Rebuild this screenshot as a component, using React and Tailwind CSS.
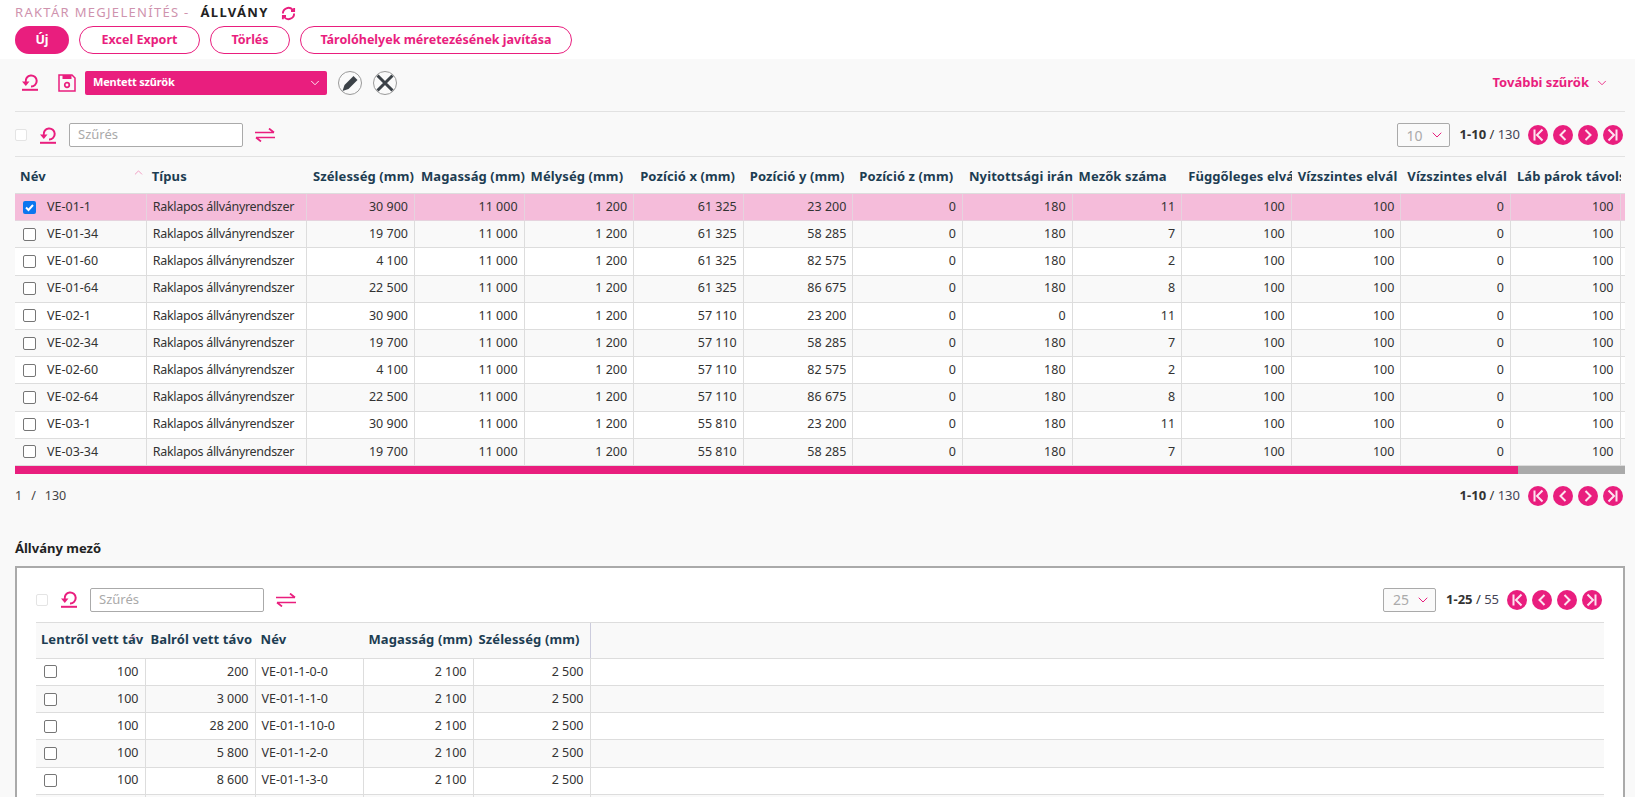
import { ChevronDown, ChevronUp } from "lucide-react";

const FONT = "font-['Noto_Sans',sans-serif]";

const MAIN_COLS = ["Név", "Típus", "Szélesség (mm)", "Magasság (mm)", "Mélység (mm)", "Pozíció x (mm)", "Pozíció y (mm)", "Pozíció z (mm)", "Nyitottsági irán", "Mezők száma", "Függőleges elvá", "Vízszintes elvál", "Vízszintes elvál", "Láb párok távols"];

const MAIN_ROWS = [
  ["VE-01-1", "30 900", "61 325", "23 200", "180", "11"],
  ["VE-01-34", "19 700", "61 325", "58 285", "180", "7"],
  ["VE-01-60", "4 100", "61 325", "82 575", "180", "2"],
  ["VE-01-64", "22 500", "61 325", "86 675", "180", "8"],
  ["VE-02-1", "30 900", "57 110", "23 200", "0", "11"],
  ["VE-02-34", "19 700", "57 110", "58 285", "180", "7"],
  ["VE-02-60", "4 100", "57 110", "82 575", "180", "2"],
  ["VE-02-64", "22 500", "57 110", "86 675", "180", "8"],
  ["VE-03-1", "30 900", "55 810", "23 200", "180", "11"],
  ["VE-03-34", "19 700", "55 810", "58 285", "180", "7"],
];

const FIELD_ROWS = [
  ["200", "VE-01-1-0-0"],
  ["3 000", "VE-01-1-1-0"],
  ["28 200", "VE-01-1-10-0"],
  ["5 800", "VE-01-1-2-0"],
  ["8 600", "VE-01-1-3-0"],
];

const MAIN_GRID = "grid grid-cols-[131.7px_160.3px_108px_repeat(11,109.6px)_20px]";
const FIELD_GRID = "grid grid-cols-[109.5px_110px_108px_110px_117px_1fr]";

function UndoIcon() {
  return (
    <svg width="18" height="17" viewBox="0 0 18 17" fill="none" stroke="#e91e7e" strokeWidth="2">
      <path d="M4.800 8 A5.500 5.500 0 1 1 10 12.500" />
      <path d="M1 7.500 L8.500 7.500 L4.800 12 Z" fill="#e91e7e" stroke="none" />
      <path d="M1 15.800 H17" />
    </svg>
  );
}

function SwapIcon() {
  return (
    <svg width="20" height="14" viewBox="0 0 20 14" fill="none" stroke="#e91e7e" strokeWidth="1.7">
      <path d="M0 4.500 H19 M14 0.500 L19 4.500" />
      <path d="M20 9.500 H1 M6 13.500 L1 9.500" />
    </svg>
  );
}

function SaveIcon() {
  return (
    <svg width="18" height="18" viewBox="0 0 18 18" fill="none" stroke="#e91e7e" strokeWidth="1.500">
      <path d="M1 1 H14 L17 4 V17 H1 Z" />
      <path d="M4.500 1 H13.500 V5 H4.500 Z" fill="#e91e7e" stroke="none" />
      <circle cx="9" cy="11" r="2.300" strokeWidth="1.700" />
    </svg>
  );
}

function PagerButton({ kind }) {
  const paths = {
    first: "M6.500 4.500 V15.500 M14.500 4.500 L9 10 L14.500 15.500",
    prev: "M12.500 5 L7.500 10 L12.500 15",
    next: "M7.500 5 L12.500 10 L7.500 15",
    last: "M13.500 4.500 V15.500 M5.500 4.500 L11 10 L5.500 15.500",
  };
  return (
    <svg width="20" height="20" viewBox="0 0 20 20" fill="none">
      <circle cx="10" cy="10" r="10" fill="#e91e7e" />
      <path d={paths[kind]} stroke="#fde4f0" strokeWidth="2" />
    </svg>
  );
}

function Pager({ range, total }) {
  return (
    <div className="flex items-center">
      <span className="text-[13px] text-[#333]">
        <b className="font-bold">{range}</b> / <span className="text-[#445]">{total}</span>
      </span>
      <div className="flex items-center gap-[5px] ml-2">
        <PagerButton kind="first" />
        <PagerButton kind="prev" />
        <PagerButton kind="next" />
        <PagerButton kind="last" />
      </div>
    </div>
  );
}

function PageSize({ value }) {
  return (
    <div className="w-[53px] h-6 border border-[#aaa] rounded-[2px] bg-[#fafafa] flex items-center justify-between pl-[9px] pr-[4px] mr-[10px]">
      <span className="text-[14px] text-[#aaa]">{value}</span>
      <ChevronDown size={16} color="#e91e7e" strokeWidth={1.5} />
    </div>
  );
}

function TableToolbar({ size, range, total }) {
  return (
    <div className="flex items-center justify-between">
      <div className="flex items-center">
        <span className="w-3 h-3 border border-[#e4e4e4] rounded-[2px] bg-white" />
        <span className="ml-[12px] flex"><UndoIcon /></span>
        <div className="ml-[12px] w-[174px] h-6 border border-[#aaa] rounded-[2px] bg-white px-2 flex items-center">
          <span className="text-[13px] text-[#aaa]">Szűrés</span>
        </div>
        <span className="ml-3 flex"><SwapIcon /></span>
      </div>
      <div className="flex items-center pr-[2px]">
        <PageSize value={size} />
        <Pager range={range} total={total} />
      </div>
    </div>
  );
}

function CheckBox({ checked }) {
  if (checked) {
    return (
      <span className="w-[13px] h-[13px] rounded-[2px] bg-[#0b76ef] flex items-center justify-center">
        <svg width="11" height="11" viewBox="0 0 11 11" fill="none" stroke="#fff" strokeWidth="2">
          <path d="M2 5.500 L4.500 8 L9 3" />
        </svg>
      </span>
    );
  }
  return <span className="w-[13px] h-[13px] rounded-[2px] border border-[#767676] bg-white" />;
}

function MainRow({ row, index }) {
  const selected = index === 0;
  const bg = selected ? "bg-[#f5bcda]" : index % 2 === 1 ? "bg-[#f9f9f9]" : "bg-white";
  const [name, width, x, y, dir, count] = row;
  const nums = [width, "11 000", "1 200", x, y, "0", dir, count, "100", "100", "0", "100"];
  const line = selected ? "border-[#e6d3de]" : "border-[#ddd]";
  return (
    <div className={`${MAIN_GRID} h-[27.2px] border-b ${line} ${bg} text-[12.5px] text-[#333] leading-none`}>
      <div className={`flex items-center border-r ${line} pl-2`}>
        <CheckBox checked={selected} />
        <span className="ml-[11px]">{name}</span>
      </div>
      <div className={`flex items-center border-r ${line} pl-[6px] whitespace-nowrap tracking-[-0.3px]`}>Raklapos állványrendszer</div>
      {nums.map((n, i) => (
        <div key={i} className={`flex items-center justify-end border-r ${line} pr-[6px]`}>{n}</div>
      ))}
      <div />
    </div>
  );
}

function FieldRow({ row, index }) {
  const bg = index % 2 === 1 ? "bg-[#f9f9f9]" : "bg-white";
  return (
    <div className={`${FIELD_GRID} h-[27.2px] border-b border-[#ddd] ${bg} text-[12.5px] text-[#333] leading-none`}>
      <div className="flex items-center justify-between border-r border-[#ddd] pl-2 pr-[6px]">
        <CheckBox />
        <span>100</span>
      </div>
      <div className="flex items-center justify-end border-r border-[#ddd] pr-[6px]">{row[0]}</div>
      <div className="flex items-center border-r border-[#ddd] pl-[6px]">{row[1]}</div>
      <div className="flex items-center justify-end border-r border-[#ddd] pr-[6px]">2 100</div>
      <div className="flex items-center justify-end border-r border-[#ddd] pr-[6px]">2 500</div>
      <div />
    </div>
  );
}

export default function App() {
  return (
    <div className={`h-[797px] overflow-hidden bg-[#f9f9f9] ${FONT}`}>
      {/* page title + actions */}
      <div className="h-[59px] bg-white px-[15px] pt-[5px]">
        <div className="flex items-center h-4 text-[13px] tracking-[1.3px]">
          <span className="text-[#cf93ae]">RAKTÁR MEGJELENÍTÉS -</span>
          <span className="ml-[11px] font-bold text-[#222]">ÁLLVÁNY</span>
          <svg className="ml-[12px]" width="15" height="15" viewBox="0 0 24 24" fill="none" stroke="#e91e7e" strokeWidth="3">
            <path d="M21 12a9 9 0 0 1-15.500 6.200L3 16M3 12A9 9 0 0 1 18.500 5.800L21 8" />
            <path d="M21 3v5h-5M3 21v-5h5" />
          </svg>
        </div>
        <div className="flex items-center gap-[10px] mt-[5px] text-[12.5px] font-bold">
          <button className="w-[54px] h-7 rounded-full bg-[#e91e7e] text-white">Új</button>
          <button className="w-[121px] h-7 rounded-full border border-[#e91e7e] bg-white text-[#e91e7e]">Excel Export</button>
          <button className="w-[80px] h-7 rounded-full border border-[#e91e7e] bg-white text-[#e91e7e]">Törlés</button>
          <button className="w-[272px] h-7 rounded-full border border-[#e91e7e] bg-white text-[#e91e7e]">Tárolóhelyek méretezésének javítása</button>
        </div>
      </div>

      {/* saved filters */}
      <div className="ml-[15px] mr-[10px] h-[53px] border-b border-[#e2e2e2] flex items-center justify-between pb-[5px]">
        <div className="flex items-center">
          <span className="ml-[6px] flex"><UndoIcon /></span>
          <span className="ml-[19px] flex"><SaveIcon /></span>
          <div className="ml-[9px] w-[242px] h-6 rounded-[2px] bg-[#e91e7e] flex items-center justify-between pl-2 pr-[5px]">
            <span className="text-white text-[11px] font-bold tracking-[-0.2px]">Mentett szűrök</span>
            <ChevronDown size={14} color="#fff" strokeWidth={1.5} />
          </div>
          <svg className="ml-[11px]" width="24" height="24" viewBox="0 0 24 24">
            <circle cx="12" cy="12" r="11.500" fill="#fafafa" stroke="#999" />
            <path d="M4.500 20 L6.500 14 L15.500 5 L19.500 9 L10.500 18 Z" fill="#3c4248" />
          </svg>
          <svg className="ml-[11px]" width="24" height="24" viewBox="0 0 24 24">
            <circle cx="12" cy="12" r="11.500" fill="#fafafa" stroke="#999" />
            <path d="M4.500 4.500 L19.500 19.500 M19.500 4.500 L4.500 19.500" stroke="#3c4248" strokeWidth="3" />
          </svg>
        </div>
        <div className="flex items-center text-[#e91e7e] text-[13px] font-bold pr-[16px]">
          További szűrök
          <ChevronDown size={14} strokeWidth={1.5} className="ml-[6px]" />
        </div>
      </div>

      {/* main table */}
      <div className="ml-[15px] mr-[10px]">
        <div className="h-[45px] border-b border-[#e2e2e2] pt-[11px]">
          <TableToolbar size="10" range="1-10" total="130" />
        </div>
        <div className="overflow-hidden">
          <div className={`${MAIN_GRID} h-[37px] text-[13px] font-bold tracking-[0.1px] text-[#1d3d52] border-b border-[#ddd] leading-none`}>
            {MAIN_COLS.map((c, i) => (
              <div key={i} className={`relative flex items-center overflow-hidden whitespace-nowrap ${i < 2 ? "pl-[5px]" : "pl-[6px]"} pt-[2px]`}>
                {c}
                {i === 0 && <ChevronUp size={13} color="#f08ab8" strokeWidth={1.5} className="absolute right-[2px] top-[9px]" />}
              </div>
            ))}
            <div />
          </div>
          {MAIN_ROWS.map((r, i) => <MainRow key={r[0]} row={r} index={i} />)}
          <div className="h-2 bg-[#aaa]">
            <div className="h-2 w-[1503px] bg-[#e91e7e]" />
          </div>
        </div>
        <div className="flex items-center justify-between mt-[12px] h-5">
          <span className="flex gap-[9px] text-[12.5px] text-[#444]"><span>1</span><span>/</span><span>130</span></span>
          <div className="pr-[2px]"><Pager range="1-10" total="130" /></div>
        </div>
      </div>

      {/* field section */}
      <div className="ml-[15px] mr-[10px] mt-[33px] text-[13px] font-bold text-[#222] h-[19px]">Állvány mező</div>
      <div className="ml-[15px] mr-[10px] mt-[8px] border-2 border-[#aaa] bg-white px-[19px] pt-[20px] h-[300px]">
        <TableToolbar size="25" range="1-25" total="55" />
        <div className="mt-[10px] border-t border-[#ddd]">
          <div className={`${FIELD_GRID} h-[36px] bg-[#f9f9f9] text-[13px] font-bold tracking-[0.1px] text-[#1d3d52] border-b border-[#ddd] leading-none`}>
            <div className="relative flex items-center overflow-hidden whitespace-nowrap pl-[5px] pb-[1px]">
              Lentről vett táv
              <ChevronUp size={13} color="#f08ab8" strokeWidth={1.5} className="absolute right-[6px] top-[8px]" />
            </div>
            <div className="flex items-center overflow-hidden whitespace-nowrap pl-[5px] pb-[1px]">Balról vett távo</div>
            <div className="flex items-center pl-[5px] pb-[1px]">Név</div>
            <div className="flex items-center overflow-hidden whitespace-nowrap pl-[5px] pb-[1px]">Magasság (mm)</div>
            <div className="flex items-center overflow-hidden whitespace-nowrap pl-[5px] pb-[1px] border-r border-[#ccd]">Szélesség (mm)</div>
            <div />
          </div>
          {FIELD_ROWS.map((r, i) => <FieldRow key={r[1]} row={r} index={i} />)}
          <div className={`${FIELD_GRID} h-[27.2px] bg-[#f9f9f9]`}>
            <div className="border-r border-[#ddd]" />
            <div className="border-r border-[#ddd]" />
            <div className="border-r border-[#ddd]" />
            <div className="border-r border-[#ddd]" />
            <div className="border-r border-[#ddd]" />
            <div />
          </div>
        </div>
      </div>
    </div>
  );
}
